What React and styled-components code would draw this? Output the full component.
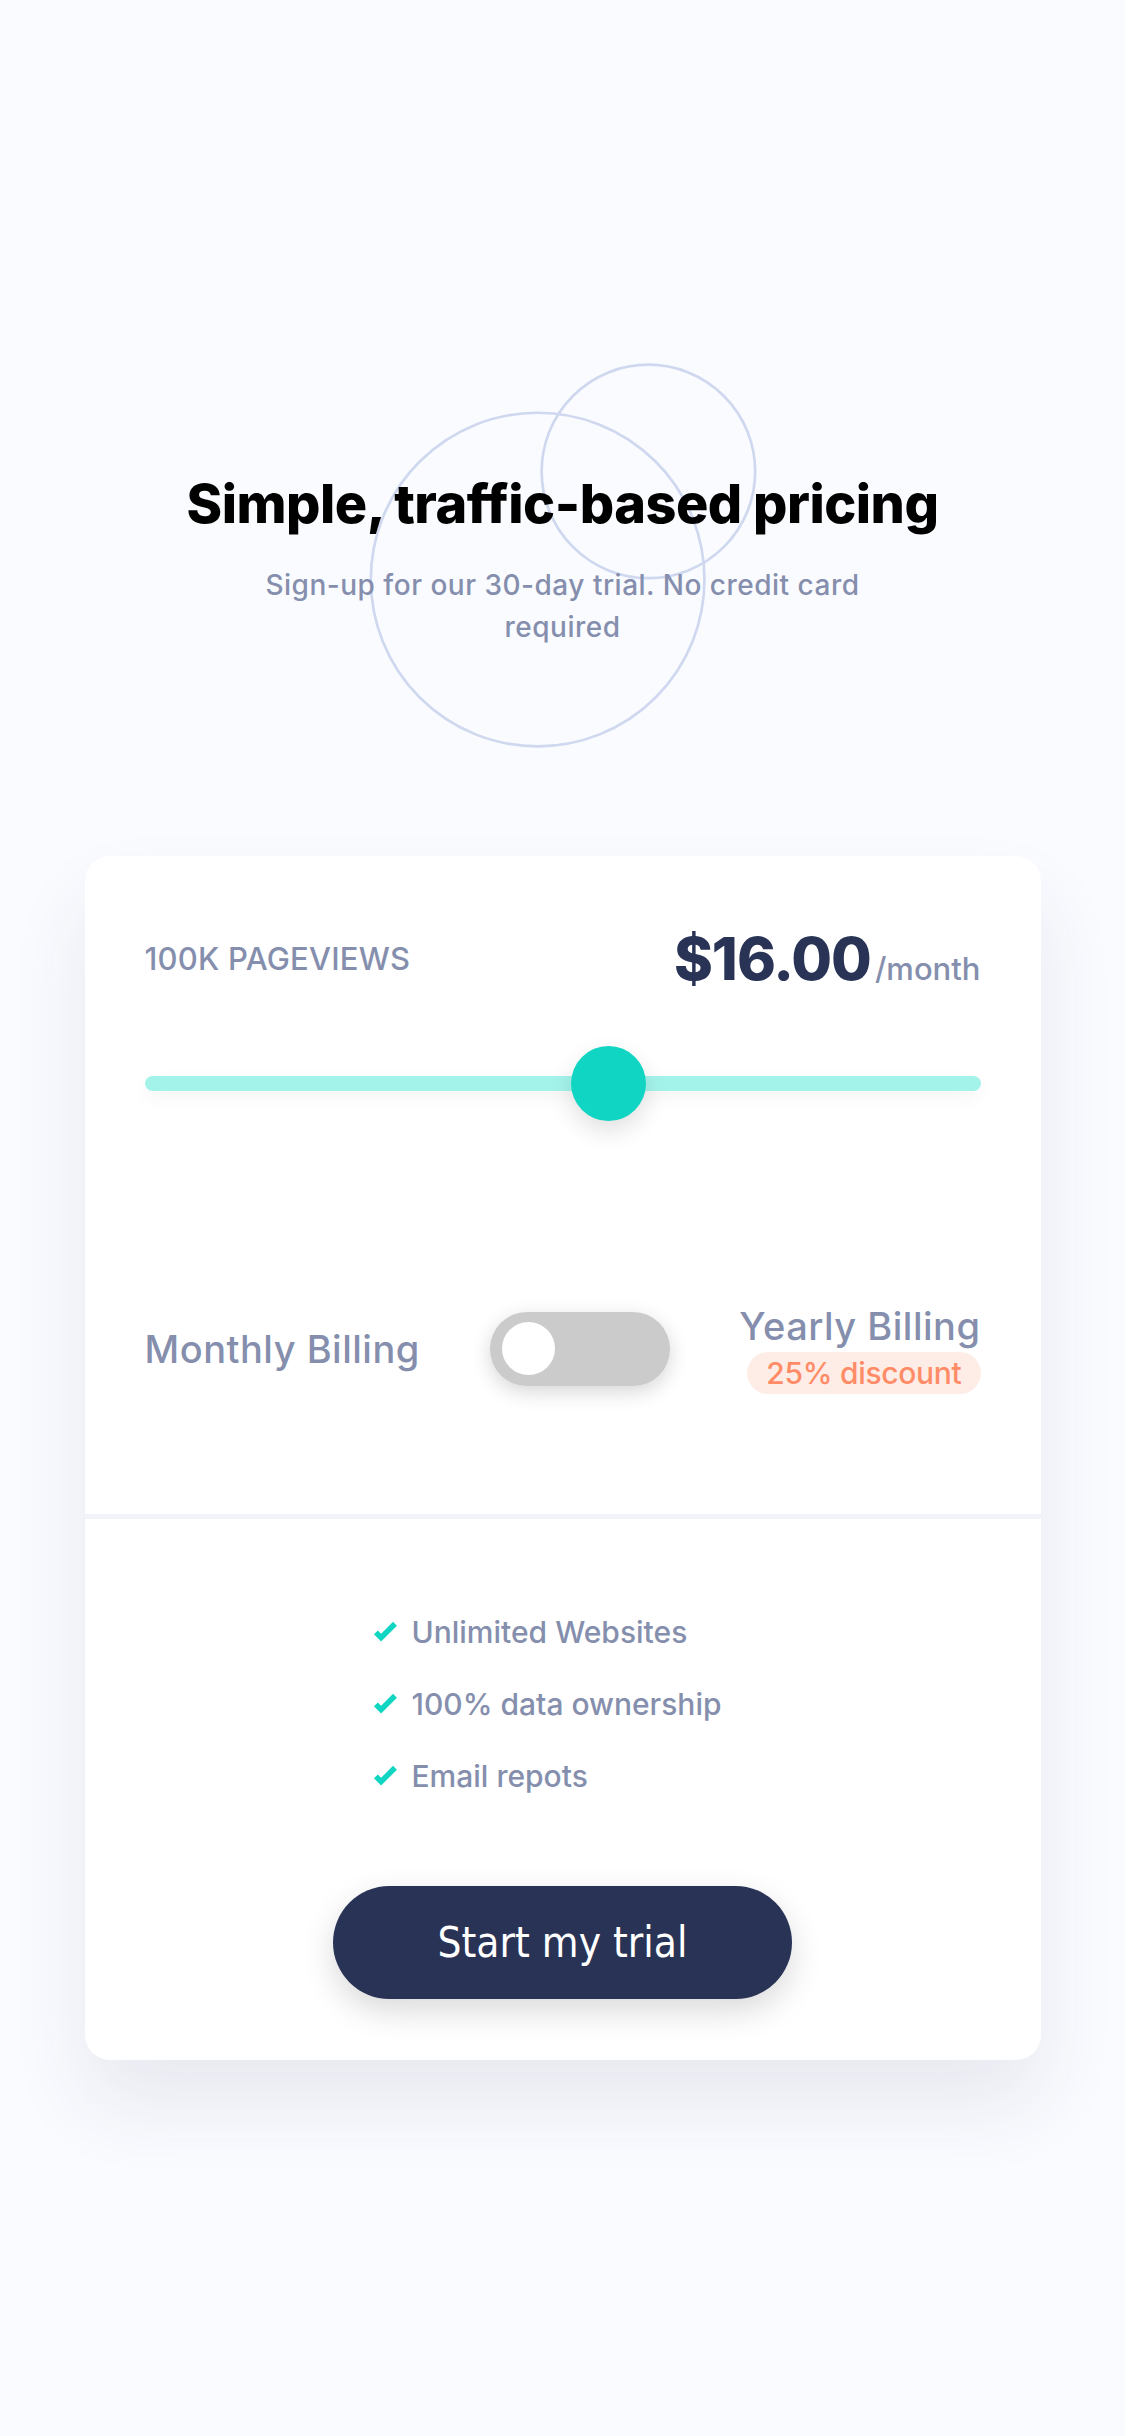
import React from 'react';
import styled, { createGlobalStyle } from 'styled-components';

const features = ['Unlimited Websites', '100% data ownership', 'Email repots'];

function CheckIcon() {
  return (
    <svg width="25" height="22" viewBox="0 0 9 8" aria-hidden="true">
      <path fill="none" stroke="#10d5c2" strokeWidth="2" d="M1 4.134l1.907 1.908L7.949 1" />
    </svg>
  );
}

function Circles() {
  return (
    <StyledCircles width="390" height="387" viewBox="0 0 146 145" aria-hidden="true">
      <g fill="none" stroke="#cfd8ef">
        <circle cx="63.5" cy="81.5" r="62.5" />
        <circle cx="105" cy="41" r="40" />
      </g>
    </StyledCircles>
  );
}

function App() {
  return (
    <>
      <GlobalStyle />
      <StyledPage>
        <StyledHeader>
          <Circles />
          <StyledTitle>Simple, traffic-based pricing</StyledTitle>
          <StyledIntro>Sign-up for our 30-day trial. No credit card required</StyledIntro>
        </StyledHeader>

        <StyledCard>
          <StyledTop>
            <StyledPriceRow>
              <StyledViews>100K Pageviews</StyledViews>
              <StyledPrice>
                <StyledAmount>$16.00</StyledAmount>
                <StyledPeriod>/month</StyledPeriod>
              </StyledPrice>
            </StyledPriceRow>

            <StyledSlider>
              <StyledTrack />
              <StyledThumb style={{ left: '55.4%' }} />
            </StyledSlider>

            <StyledBillingRow>
              <StyledBillingLabel>Monthly Billing</StyledBillingLabel>
              <StyledToggle>
                <StyledKnob />
              </StyledToggle>
              <StyledYearly>
                <StyledBillingLabel>Yearly Billing</StyledBillingLabel>
                <StyledBadge>25% discount</StyledBadge>
              </StyledYearly>
            </StyledBillingRow>
          </StyledTop>

          <StyledBottom>
            <StyledList>
              {features.map((item) => (
                <StyledItem key={item}>
                  <CheckIcon />
                  {item}
                </StyledItem>
              ))}
            </StyledList>
            <StyledButton>Start my trial</StyledButton>
          </StyledBottom>
        </StyledCard>
      </StyledPage>
    </>
  );
}

const GlobalStyle = createGlobalStyle`
  * { box-sizing: border-box; }
  body {
    margin: 0;
    background: #fafbff;
    font-family: Inter, "Noto Sans", sans-serif;
  }
`;

const StyledPage = styled.main`
  min-height: 2436px;
  padding-top: 362px;
  display: flex;
  flex-direction: column;
  align-items: center;
`;

const StyledHeader = styled.header`
  position: relative;
  width: 100%;
  display: flex;
  flex-direction: column;
  align-items: center;
  text-align: center;
`;

const StyledCircles = styled.svg`
  position: absolute;
  top: 0;
  left: 50%;
  transform: translateX(-50%);
  z-index: 0;
`;

const StyledTitle = styled.h1`
  position: relative;
  margin: 109px 0 0;
  font-size: 54px;
  line-height: 65px;
  font-weight: 800;
  letter-spacing: -0.5px;
  color: #000;
`;

const StyledIntro = styled.p`
  position: relative;
  margin: 28px 0 0;
  max-width: 660px;
  font-size: 28px;
  line-height: 42px;
  font-weight: 500;
  letter-spacing: 0.5px;
  color: #858fad;
`;

const StyledCard = styled.section`
  width: 956px;
  margin-top: 208px;
  background: #fff;
  border-radius: 25px;
  box-shadow: 0 45px 80px rgba(40, 50, 90, 0.09);
`;

const StyledTop = styled.div`
  padding: 73px 60px 120px;
  border-bottom: 5px solid #f1f3f8;
`;

const StyledPriceRow = styled.div`
  display: flex;
  align-items: center;
  justify-content: space-between;
`;

const StyledViews = styled.span`
  font-size: 31px;
  line-height: 1;
  font-weight: 500;
  text-transform: uppercase;
  letter-spacing: 0.2px;
  color: #858fad;
`;

const StyledPrice = styled.div`
  display: flex;
  align-items: baseline;
  gap: 4px;
`;

const StyledAmount = styled.span`
  font-size: 59px;
  line-height: 1;
  font-weight: 800;
  letter-spacing: -1px;
  color: #293356;
`;

const StyledPeriod = styled.span`
  font-size: 31px;
  font-weight: 500;
  color: #858fad;
`;

const StyledSlider = styled.div`
  position: relative;
  height: 75px;
  margin-top: 58px;
  display: flex;
  align-items: center;
`;

const StyledTrack = styled.div`
  width: 100%;
  height: 15px;
  border-radius: 8px;
  background: #a4f3eb;
  box-shadow: 0 6px 18px rgba(0, 0, 0, 0.05);
`;

const StyledThumb = styled.div`
  position: absolute;
  top: 0;
  width: 75px;
  height: 75px;
  margin-left: -37px;
  border-radius: 50%;
  background: #10d5c2;
  box-shadow: 0 10px 24px rgba(0, 0, 0, 0.12);
`;

const StyledBillingRow = styled.div`
  margin-top: 183px;
  display: flex;
  align-items: center;
  justify-content: space-between;
`;

const StyledBillingLabel = styled.span`
  font-size: 38px;
  line-height: 44px;
  font-weight: 500;
  letter-spacing: 0.5px;
  color: #858fad;
`;

const StyledToggle = styled.div`
  width: 180px;
  height: 74px;
  padding: 10px 12px;
  border-radius: 37px;
  background: #cbcbcb;
  box-shadow: 0 6px 20px rgba(0, 0, 0, 0.16);
`;

const StyledKnob = styled.div`
  width: 53px;
  height: 53px;
  border-radius: 50%;
  background: #fff;
`;

const StyledYearly = styled.div`
  display: flex;
  flex-direction: column;
  align-items: flex-end;
  gap: 4px;
`;

const StyledBadge = styled.span`
  padding: 0 19px;
  height: 42px;
  border-radius: 21px;
  background: #feece7;
  color: #ff8c66;
  font-size: 30px;
  line-height: 42px;
  font-weight: 500;
  letter-spacing: -0.3px;
`;

const StyledBottom = styled.div`
  padding: 92px 60px 61px;
  display: flex;
  flex-direction: column;
  align-items: center;
`;

const StyledList = styled.ul`
  list-style: none;
  margin: 0;
  padding: 0 0 0 228px;
  align-self: stretch;
  display: flex;
  flex-direction: column;
  gap: 30px;
`;

const StyledItem = styled.li`
  display: flex;
  align-items: center;
  gap: 14px;
  font-size: 30px;
  line-height: 42px;
  font-weight: 500;
  letter-spacing: 0;
  color: #858fad;
`;

const StyledButton = styled.button`
  margin-top: 89px;
  width: 459px;
  height: 113px;
  border: none;
  border-radius: 57px;
  background: #293356;
  color: #fff;
  font-family: "DejaVu Sans Condensed", "DejaVu Sans", sans-serif;
  font-size: 42px;
  cursor: pointer;
  box-shadow: 0 12px 32px rgba(0, 0, 0, 0.15);
`;

export default App;
